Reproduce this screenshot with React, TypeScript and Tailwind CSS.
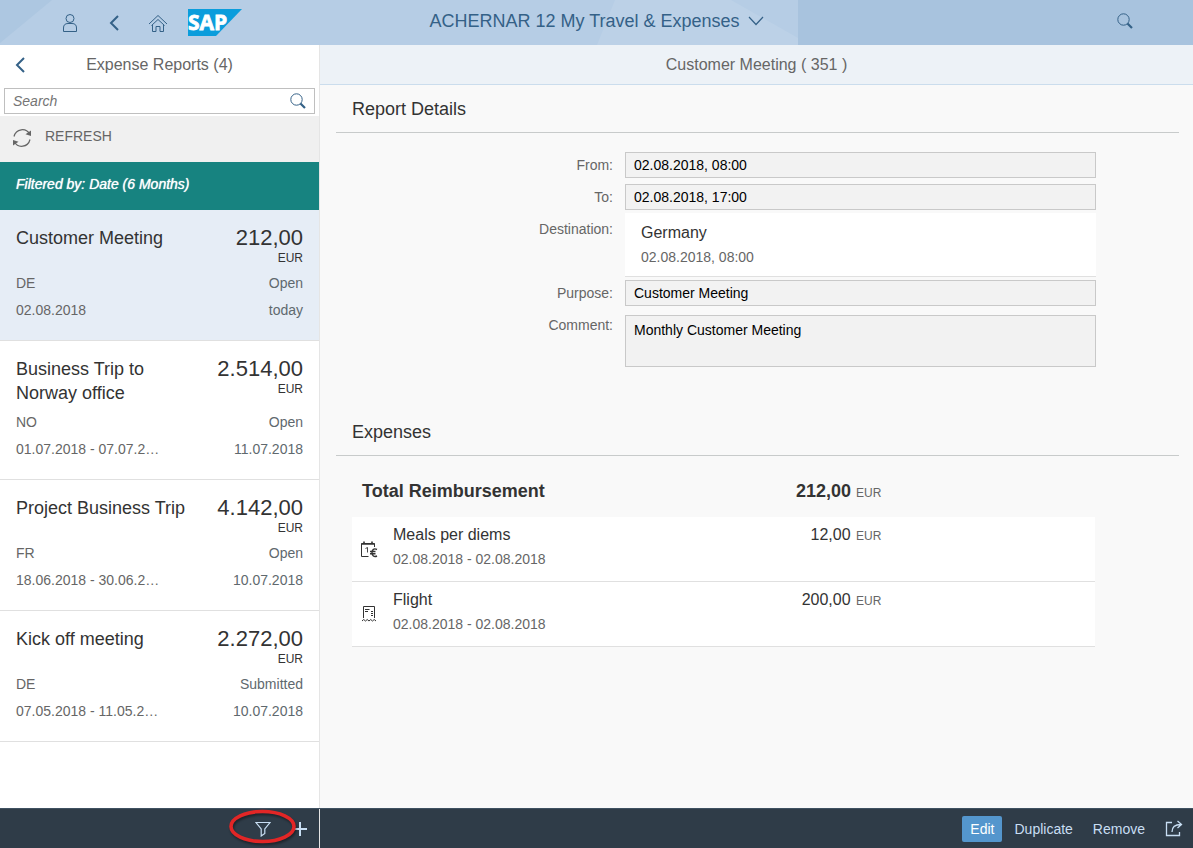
import type { ReactNode } from 'react';

interface Report {
  title: string;
  amount: string;
  currency: string;
  country: string;
  status: string;
  period: string;
  changed: string;
}

interface Expense {
  name: string;
  period: string;
  amount: string;
  icon: ReactNode;
}

const REPORTS: Report[] = [
  {
    title: 'Customer Meeting',
    amount: '212,00',
    currency: 'EUR',
    country: 'DE',
    status: 'Open',
    period: '02.08.2018',
    changed: 'today',
  },
  {
    title: 'Business Trip to Norway office',
    amount: '2.514,00',
    currency: 'EUR',
    country: 'NO',
    status: 'Open',
    period: '01.07.2018 - 07.07.2…',
    changed: '11.07.2018',
  },
  {
    title: 'Project Business Trip',
    amount: '4.142,00',
    currency: 'EUR',
    country: 'FR',
    status: 'Open',
    period: '18.06.2018 - 30.06.2…',
    changed: '10.07.2018',
  },
  {
    title: 'Kick off meeting',
    amount: '2.272,00',
    currency: 'EUR',
    country: 'DE',
    status: 'Submitted',
    period: '07.05.2018 - 11.05.2…',
    changed: '10.07.2018',
  },
];

const EXPENSES: Expense[] = [
  {
    name: 'Meals per diems',
    period: '02.08.2018 - 02.08.2018',
    amount: '12,00',
    icon: <PerDiemIcon />,
  },
  {
    name: 'Flight',
    period: '02.08.2018 - 02.08.2018',
    amount: '200,00',
    icon: <ReceiptIcon />,
  },
];

function UserIcon() {
  return (
    <svg className="w-4 h-5" viewBox="0 0 16 20" fill="none" stroke="currentColor">
      <circle cx="8" cy="5.5" r="4" />
      <path d="M1.5 18.5v-3.500q0-4.500 4.500-4.500h4q4.500 0 4.500 4.500v3.500z" />
    </svg>
  );
}

function BackIcon() {
  return (
    <svg className="w-3 h-4" viewBox="0 0 12 16" fill="none" stroke="currentColor" strokeWidth="2">
      <path d="M10 1 3 8l7 7" />
    </svg>
  );
}

function HomeIcon() {
  return (
    <svg className="w-5 h-5" viewBox="0 0 20 20" fill="none" stroke="currentColor">
      <path d="M1 11l9-8.500L19 11M3.500 12.500 10 6.500l6.500 6" />
      <path d="M4.500 12v6.500h3.500v-5h4v5h3.500V12" />
    </svg>
  );
}

function SapLogo() {
  return (
    <svg className="w-[54px] h-[27px]" viewBox="0 0 54 27" role="img" aria-label="SAP">
      <path d="M0 0h54L28 27H0z" fill="#0b9ddc" />
      <text
        x="0"
        y="21"
        fill="#fff"
        stroke="#fff"
        strokeWidth="0.8"
        className="font-['Open_Sans',sans-serif] text-[21px] font-bold"
      >
        SAP
      </text>
    </svg>
  );
}

function SearchIcon() {
  return (
    <svg className="w-4 h-4" viewBox="0 0 16 16" fill="none" stroke="currentColor">
      <circle cx="6.500" cy="6.500" r="5.700" />
      <path d="M10.500 10.500 15 15" strokeWidth="2.200" />
    </svg>
  );
}

function ChevronDownIcon() {
  return (
    <svg className="w-4 h-4" viewBox="0 0 16 16" fill="none" stroke="currentColor" strokeWidth="1.200">
      <path d="M1 4l7 7.500L15 4" />
    </svg>
  );
}

function RefreshIcon() {
  return (
    <svg className="w-5 h-5" viewBox="0 0 20 20" fill="none" stroke="currentColor">
      <path d="M2 8.500C4 .500 14 -.500 17.500 6M18 11.500C16 19.500 6 20.500 2.500 14" strokeWidth="1.200" />
      <path d="M19 2.500V8l-5.500-1.800zM1 17.500V12l5.500 1.800z" fill="currentColor" stroke="none" />
    </svg>
  );
}

function FilterIcon() {
  return (
    <svg className="w-4 h-4" viewBox="0 0 16 16" fill="none" stroke="currentColor" strokeWidth="1.200">
      <path d="M1 1.500h14L9.800 8v4.500L6.200 15V8z" />
    </svg>
  );
}

function AddIcon() {
  return (
    <svg className="w-4 h-4" viewBox="0 0 16 16" fill="none" stroke="currentColor" strokeWidth="2">
      <path d="M8 1v14M1 8h14" />
    </svg>
  );
}

function ShareIcon() {
  return (
    <svg className="w-[18px] h-[18px]" viewBox="0 0 18 18" fill="none" stroke="currentColor" strokeWidth="1.300">
      <path d="M7 2.500H1.500v13h13V12" />
      <path d="M7 12c0-4.500 2.500-7.500 9-7.500M12.500 1 16.500 4.500l-4 3.500" />
    </svg>
  );
}

function PerDiemIcon() {
  return (
    <svg className="w-[18px] h-[18px]" viewBox="0 0 18 18" fill="none" stroke="currentColor">
      <path d="M8.500 16.500h-7v-13h13V7" />
      <path d="M1.500 4h13M4 1.500V4M12 1.500V4" strokeWidth="1.600" />
      <path d="M5.500 8.500 7.500 7.500v5" strokeWidth="0.900" />
      <path d="M17 9.500c-3-1.500-5 0-5 3s2 5 5 3.500M10 11.500h5.500M10 13.700h5.500" strokeWidth="1.400" />
    </svg>
  );
}

function ReceiptIcon() {
  return (
    <svg className="w-[18px] h-[18px]" viewBox="0 0 18 18" fill="none" stroke="currentColor">
      <path d="M3.500 13V1.500h11V13" />
      <path d="M2 16l1.700-1.500L5.500 16l1.700-1.500L9 16l1.700-1.500 1.800 1.500 1.700-1.500L16 16" />
      <path d="M5 4.500h4.500M5 6.500h3M11 6.500h2M11 8.500h2M11 10.500h2" />
    </svg>
  );
}

function ShellHeader() {
  return (
    <header className="relative grid grid-cols-[1fr_auto_1fr] items-center h-[45px] shrink-0 bg-[#a8c3de] text-[#346187] overflow-hidden">
      <svg className="absolute left-0 top-0 w-[798px] h-[45px]" viewBox="0 0 798 45" aria-hidden="true">
        <path d="M0 0h798v45H0z" fill="#b6cde5" />
        <path d="M0 0h52L0 43z" fill="#adc7e1" />
        <path d="M615 0h116l67 38v7H597z" fill="#bcd1e7" />
      </svg>
      <div className="relative flex items-center pl-12">
        <button type="button" aria-label="User" className="flex w-11 h-[42px] items-center justify-center">
          <UserIcon />
        </button>
        <button type="button" aria-label="Back" className="flex w-11 h-[42px] items-center justify-center">
          <BackIcon />
        </button>
        <button type="button" aria-label="Home" className="flex w-11 h-[42px] items-center justify-center">
          <HomeIcon />
        </button>
        <a href="#" className="ml-2">
          <SapLogo />
        </a>
      </div>
      <button type="button" className="relative flex items-center gap-2 pb-1 text-lg">
        ACHERNAR 12 My Travel &amp; Expenses
        <ChevronDownIcon />
      </button>
      <div className="relative flex justify-end pr-[60px]">
        <button type="button" aria-label="Search" className="pb-1">
          <SearchIcon />
        </button>
      </div>
    </header>
  );
}

function ReportItem({ report, selected }: { report: Report; selected: boolean }) {
  return (
    <li>
      <a
        href="#"
        className={`block p-4 border-b border-[#e0e0e0] text-sm text-[#666] ${
          selected ? 'bg-[#e6edf6]' : 'bg-white'
        }`}
      >
        <div className="flex justify-between gap-4 text-[#333]">
          <span className="text-lg leading-6">{report.title}</span>
          <span className="text-right shrink-0">
            <span className="block text-[22px] leading-6">{report.amount}</span>
            <span className="block text-xs leading-4">{report.currency}</span>
          </span>
        </div>
        <div className="flex justify-between mt-1 leading-[27px]">
          <span>{report.country}</span>
          <span className="text-[#5f696e]">{report.status}</span>
        </div>
        <div className="flex justify-between leading-[27px]">
          <span>{report.period}</span>
          <span className="text-[#5f696e]">{report.changed}</span>
        </div>
      </a>
    </li>
  );
}

function MasterList() {
  return (
    <aside className="flex flex-col w-80 shrink-0 bg-white border-r border-[#e5e5e5] overflow-hidden">
      <div className="relative flex items-center justify-center h-10 text-[#666]">
        <button type="button" aria-label="Back to overview" className="absolute left-[14px] text-[#346187]">
          <BackIcon />
        </button>
        <h1 className="text-base">Expense Reports (4)</h1>
      </div>
      <div className="px-1 pt-[3px] pb-0.5">
        <label className="flex items-center h-[26px] border border-[#bfbfbf] px-2 text-[#346187]">
          <input
            type="search"
            aria-label="Search"
            placeholder="Search"
            className="flex-1 min-w-0 text-sm text-[#333] outline-none placeholder:italic placeholder:text-[#757575]"
          />
          <SearchIcon />
        </label>
      </div>
      <button
        type="button"
        className="flex h-[46px] shrink-0 items-start gap-[13px] px-3 pt-3 bg-[#f0f0f0] text-sm leading-4 text-[#666]"
      >
        <RefreshIcon />
        REFRESH
      </button>
      <div className="h-12 shrink-0 px-4 pt-3 bg-[#178380] text-sm leading-5 italic text-white [text-shadow:0_0_1px_#fff]">
        Filtered by: Date (6 Months)
      </div>
      <ul>
        {REPORTS.map((report, index) => (
          <ReportItem key={report.title} report={report} selected={index === 0} />
        ))}
      </ul>
    </aside>
  );
}

function SectionTitle({ children }: { children: ReactNode }) {
  return (
    <h3 className="flex items-center h-12 px-4 border-b border-[#c8cbcb] text-lg text-[#333]">{children}</h3>
  );
}

function FormRow({ label, htmlFor, children }: { label: string; htmlFor: string; children: ReactNode }) {
  return (
    <div className="grid grid-cols-[4fr_7fr_1fr]">
      <label htmlFor={htmlFor} className="pr-3 text-right text-sm leading-8 text-[#666]">
        {label}
      </label>
      {children}
    </div>
  );
}

function ReadOnlyField({ id, label, value }: { id: string; label: string; value: string }) {
  return (
    <FormRow label={label} htmlFor={id}>
      <input
        id={id}
        readOnly
        value={value}
        className="w-full min-w-0 h-[26px] my-[3px] px-2 border border-[#c9c9c9] bg-[#f2f2f2] text-sm text-black"
      />
    </FormRow>
  );
}

function ReportDetails() {
  return (
    <section>
      <SectionTitle>Report Details</SectionTitle>
      <div className="pt-4 pl-5 pr-4 pb-10">
        <ReadOnlyField id="from" label="From:" value="02.08.2018, 08:00" />
        <ReadOnlyField id="to" label="To:" value="02.08.2018, 17:00" />
        <FormRow label="Destination:" htmlFor="destination">
          <output id="destination" className="block h-16 px-4 pt-2 bg-white border-b border-[#e0e0e0]">
            <span className="block text-base leading-6 text-[#333]">Germany</span>
            <span className="block text-sm leading-6 text-[#666]">02.08.2018, 08:00</span>
          </output>
        </FormRow>
        <ReadOnlyField id="purpose" label="Purpose:" value="Customer Meeting" />
        <FormRow label="Comment:" htmlFor="comment">
          <textarea
            id="comment"
            readOnly
            value="Monthly Customer Meeting"
            className="block w-full h-[52px] mt-1.5 mb-px px-2 py-1 border border-[#c9c9c9] bg-[#f2f2f2] text-sm leading-5 text-black resize-none"
          />
        </FormRow>
      </div>
    </section>
  );
}

function Expenses() {
  return (
    <section>
      <SectionTitle>Expenses</SectionTitle>
      <div className="px-4 pt-2">
        <table className="w-11/12 table-fixed text-[#333]">
          <colgroup>
            <col className="w-[41px]" />
            <col />
            <col className="w-[140px]" />
            <col className="w-[214px]" />
          </colgroup>
          <thead>
            <tr className="h-[53px]">
              <th colSpan={2} className="pl-[10px] text-left text-lg font-bold">
                Total Reimbursement
              </th>
              <th className="text-right text-lg font-bold whitespace-nowrap">
                212,00 <span className="text-xs font-normal text-[#666]">EUR</span>
              </th>
              <td />
            </tr>
          </thead>
          <tbody>
            {EXPENSES.map((expense) => (
              <tr key={expense.name} className="bg-white border-b border-[#e0e0e0]">
                <td className="pl-2 align-middle">{expense.icon}</td>
                <td className="pt-1.5 pb-[10px]">
                  <div className="text-base leading-6">{expense.name}</div>
                  <div className="text-sm leading-6 text-[#666]">{expense.period}</div>
                </td>
                <td className="pt-1.5 align-top text-right text-base leading-6 whitespace-nowrap">
                  {expense.amount} <span className="ml-px text-xs text-[#666]">EUR</span>
                </td>
                <td />
              </tr>
            ))}
          </tbody>
        </table>
      </div>
    </section>
  );
}

function Footer() {
  return (
    <footer className="flex h-10 shrink-0 border-t border-[#3f5161] bg-[#2f3c48] text-sm text-[#c8def3] [text-shadow:0_0_2px_#000]">
      <div className="relative flex items-center justify-end gap-[21px] w-80 shrink-0 pr-[11px] border-r border-[#e5e5e5]">
        <button type="button" aria-label="Filter">
          <FilterIcon />
        </button>
        <button type="button" aria-label="Add">
          <AddIcon />
        </button>
        {/* red marker ring around the filter button */}
        <svg
          className="absolute left-[228px] top-[-2px] w-[70px] h-[40px] pointer-events-none drop-shadow-[1px_2px_1px_rgba(0,0,0,0.4)]"
          viewBox="0 0 70 40"
          fill="none"
          aria-hidden="true"
        >
          <ellipse cx="34.500" cy="19.500" rx="31.500" ry="15" stroke="#e22626" strokeWidth="3.600" />
        </svg>
      </div>
      <div className="flex flex-1 items-center justify-end gap-1 pr-0.5">
        <button type="button" className="h-[26px] px-2 rounded-xs bg-[#5496cd] text-white">
          Edit
        </button>
        <button type="button" className="h-[26px] px-2">
          Duplicate
        </button>
        <button type="button" className="h-[26px] px-2">
          Remove
        </button>
        <button type="button" aria-label="Share" className="h-[26px] px-2">
          <ShareIcon />
        </button>
      </div>
    </footer>
  );
}

export default function App() {
  return (
    <div className="flex flex-col h-screen bg-[#f9f9f9] font-['Liberation_Sans',Arial,sans-serif]">
      <ShellHeader />
      <div className="flex flex-1 min-h-0">
        <MasterList />
        <main className="flex-1 min-w-0 overflow-hidden">
          <h2 className="flex items-center justify-center h-10 border-b border-[#cbdded] bg-[#edf2f7] text-base text-[#666]">
            Customer Meeting ( 351 )
          </h2>
          <div className="pl-4 pr-[14px]">
            <ReportDetails />
            <Expenses />
          </div>
        </main>
      </div>
      <Footer />
    </div>
  );
}
